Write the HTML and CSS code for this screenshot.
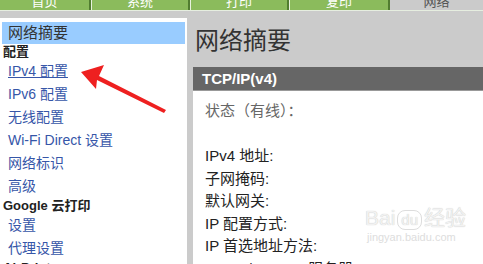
FILE: index.html
```html
<!DOCTYPE html>
<html>
<head>
<meta charset="utf-8">
<title>网络摘要</title>
<link rel="stylesheet" href="styles.css">
</head>
<body>
<div class="tabs">
  <div class="tab t1"><span>首页</span></div>
  <div class="tab t2"><span>系统</span></div>
  <div class="tab t3"><span>打印</span></div>
  <div class="tab t4"><span>复印</span></div>
  <div class="tab current"><span>网络</span></div>
</div>

<div class="main">
  <div class="side">
    <div class="side_sel">网络摘要</div>
    <div class="side_head">配置</div>
    <a class="side_link hover" href="#">IPv4 配置</a>
    <a class="side_link" href="#">IPv6 配置</a>
    <a class="side_link" href="#">无线配置</a>
    <a class="side_link" href="#">Wi-Fi Direct 设置</a>
    <a class="side_link" href="#">网络标识</a>
    <a class="side_link" href="#">高级</a>
    <div class="side_head">Google 云打印</div>
    <a class="side_link" href="#">设置</a>
    <a class="side_link" href="#">代理设置</a>
    <div class="side_head">AirPrint</div>
  </div>

  <div class="content">
    <div class="title">网络摘要</div>
    <div class="bar">TCP/IP(v4)</div>
    <div class="box">
      <div class="row dim">状态（有线）：</div>
      <div class="row">&nbsp;</div>
      <div class="row">IPv4 地址:</div>
      <div class="row">子网掩码:</div>
      <div class="row">默认网关:</div>
      <div class="row">IP 配置方式:</div>
      <div class="row">IP 首选地址方法:</div>
      <div class="row">DHCP/BOOTP 服务器:</div>
      <div class="mark">
        <div class="mark_logo">Bai<span class="mark_du">du</span>经验</div>
        <div class="mark_url">jingyan.baidu.com</div>
      </div>
    </div>
  </div>
</div>

<svg class="arrow" width="483" height="264" viewBox="0 0 483 264">
  <polygon points="81,72 104,65 99,76 166,110 164,113 97,80 96,89" fill="#ee2020"/>
</svg>
</body>
</html>
```

FILE: styles.css
```css
body {
    margin: 0;
    width: 483px;
    height: 264px;
    overflow: hidden;
    background-color: #cbcbcb;
    font-family: "Liberation Sans", "Noto Sans CJK SC", sans-serif;
    position: relative;
}
.tabs {
    display: flex;
    height: 10px;
    border-bottom: 1px solid #e6eee0;
    overflow: hidden;
}
.tab {
    height: 10px;
    background-color: #8bbb5c;
    border-right: 2px solid #517d30;
    border-left: 1px solid #e8f2de;
    color: #ffffff;
    font-size: 13px;
    text-align: center;
    overflow: hidden;
}
.tab span {
    display: block;
    line-height: 13px;
    margin-top: -5px;
}
.t1 { width: 89px; border-left: none; }
.t2 { width: 96px; }
.t3 { width: 96px; }
.t4 { width: 98px; }
.tab.current {
    flex: 1;
    background-color: #cbcbcb;
    border: none;
    color: #555555;
}
.main {
    display: flex;
    margin-top: 7px;
    gap: 6px;
}
.side {
    width: 187px;
    flex: none;
    height: 260px;
    background-color: #ffffff;
    padding-top: 4px;
    box-sizing: border-box;
}
.side_sel {
    margin-left: 2px;
    width: 177px;
    height: 22px;
    line-height: 22px;
    padding-left: 6px;
    background-color: #99ccff;
    color: #333333;
    font-size: 15px;
}
.side_head {
    height: 16px;
    line-height: 16px;
    padding-left: 3px;
    font-size: 13px;
    font-weight: bold;
    color: #222222;
}
.side_link {
    display: block;
    height: 23px;
    line-height: 23px;
    padding-left: 8px;
    font-size: 14px;
    color: #3656a8;
    text-decoration: none;
}
.side_link.hover {
    text-decoration: underline;
}
.content {
    flex: 1;
    min-width: 0;
}
.title {
    padding-top: 8px;
    padding-left: 2px;
    line-height: 30px;
    height: 30px;
    margin-bottom: 11px;
    font-size: 24px;
    color: #333333;
}
.bar {
    height: 23px;
    line-height: 23px;
    padding-left: 9px;
    background-color: #666666;
    border-bottom: 1px solid #999999;
    color: #ffffff;
    font-size: 15px;
    font-weight: bold;
}
.box {
    position: relative;
    height: 180px;
    background-color: #ffffff;
    padding-top: 9px;
    padding-left: 12px;
}
.row {
    line-height: 22.5px;
    height: 22.5px;
    font-size: 15px;
    color: #222222;
}
.row.dim {
    color: #666666;
}
.mark {
    position: absolute;
    left: 172px;
    top: 115px;
    color: #f2f2f2;
    text-shadow: 0 0 1px #bbbbbb;
}
.mark_logo {
    font-size: 21px;
    line-height: 24px;
}
.mark_du {
    display: inline-block;
    margin: 0 2px;
    padding: 0 3px;
    border-radius: 8px;
    border: 1px solid #dddddd;
    font-size: 15px;
    line-height: 18px;
}
.mark_url {
    font-size: 11px;
    line-height: 14px;
    color: #dddddd;
    text-shadow: none;
    margin-left: 2px;
}
.arrow {
    position: absolute;
    left: 0;
    top: 0;
    pointer-events: none;
}
```
